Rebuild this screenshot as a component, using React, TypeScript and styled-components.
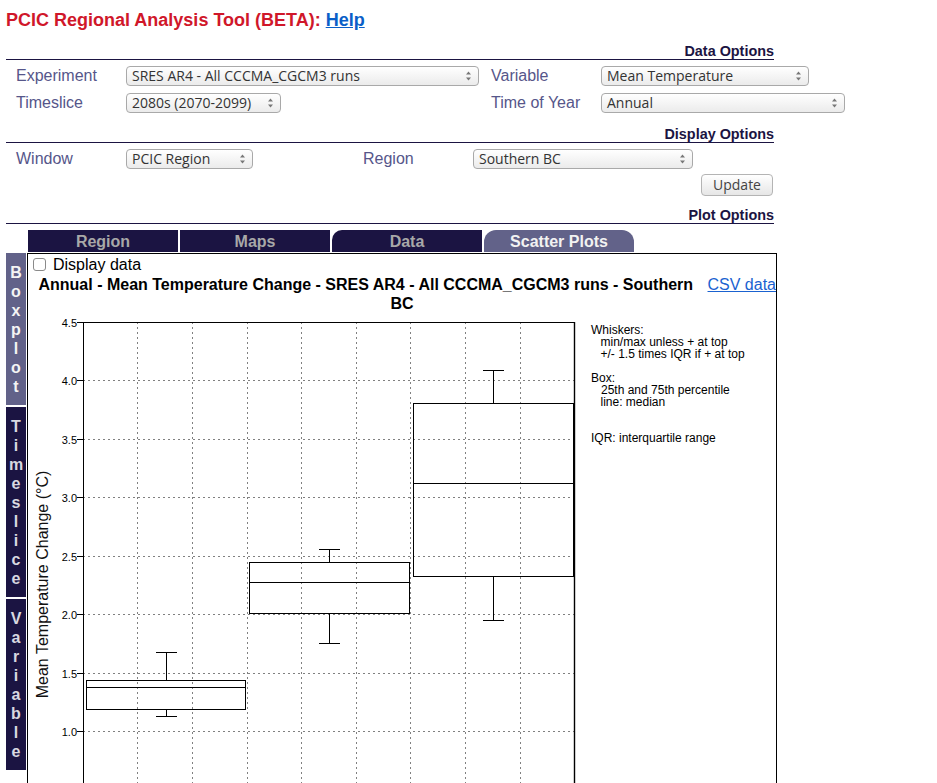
import React from "react";
import styled, { createGlobalStyle } from "styled-components";

const NAVY = "#1b1442";
const TAB_LIGHT = "#626289";

const GlobalStyle = createGlobalStyle`
  html, body { margin: 0; padding: 0; overflow: hidden; background: #fff; }
  body { font-family: "Liberation Sans", Arial, sans-serif; }
`;

const Page = styled.div`
  padding: 0 6px;
  width: 937px;
  box-sizing: border-box;
`;

const Title = styled.h1`
  margin: 0;
  padding-top: 10px;
  height: 40px;
  box-sizing: border-box;
  font-size: 18px;
  line-height: 20px;
  font-weight: bold;
  color: #d0172a;
`;

const HelpLink = styled.a`
  color: #0a5fc8;
  text-decoration: underline;
  cursor: pointer;
`;

const SectionHeading = styled.div<{ $mt: number }>`
  width: 768px;
  margin-top: ${(p) => p.$mt}px;
  padding-top: 3px;
  height: 20px;
  box-sizing: border-box;
  border-bottom: 1px solid ${NAVY};
  text-align: right;
  font-size: 14.4px;
  line-height: 16px;
  font-weight: bold;
  color: ${NAVY};
`;

const FormGrid = styled.div<{ $cols: string }>`
  display: grid;
  grid-template-columns: ${(p) => p.$cols};
  row-gap: 7px;
  align-items: center;
  padding: 6px 0 0 10px;
`;

const Label = styled.span`
  font-size: 16px;
  line-height: 20px;
  color: #56568a;
`;

const SelectBox = styled.div<{ $w: number }>`
  width: ${(p) => p.$w}px;
  height: 20px;
  box-sizing: border-box;
  border: 1px solid #a9a9a9;
  border-radius: 4px;
  background: linear-gradient(#ffffff, #ebebeb);
  display: flex;
  align-items: center;
  justify-content: space-between;
  padding: 0 7px 1px 5px;
  font-family: "Open Sans", "Noto Sans", sans-serif;
  font-size: 14px;
  line-height: 16px;
  color: #333;
  white-space: nowrap;
`;

const ButtonRow = styled.div`
  width: 768px;
  display: flex;
  justify-content: flex-end;
  margin-top: 5px;
`;

const UpdateButton = styled.button`
  width: 72px;
  height: 22px;
  margin-right: 1px;
  padding: 0 0 1px;
  border: 1px solid #b4b4b4;
  border-radius: 4px;
  background: linear-gradient(#ffffff, #e6e6e6);
  font-family: "Open Sans", "Noto Sans", sans-serif;
  font-size: 14px;
  line-height: 16px;
  color: #444;
`;

const TabBar = styled.div`
  display: flex;
  gap: 2px;
  margin: 6px 0 0 22px;
`;

const Tab = styled.div<{ $active?: boolean; $radius: string }>`
  width: 150px;
  height: 22px;
  line-height: 24px;
  text-align: center;
  font-size: 16px;
  font-weight: bold;
  background: ${(p) => (p.$active ? TAB_LIGHT : NAVY)};
  color: ${(p) => (p.$active ? "#f2f2f2" : "#a8a8a8")};
  border-radius: ${(p) => p.$radius};
  overflow: hidden;
`;

const Main = styled.div`
  display: flex;
  margin-top: 1px;
`;

const SideTabs = styled.div`
  width: 21px;
  display: flex;
  flex-direction: column;
  gap: 2px;
`;

const SideTab = styled.div<{ $active?: boolean }>`
  width: 20px;
  padding: 10px 0 9px;
  display: flex;
  flex-direction: column;
  align-items: center;
  font-family: "Liberation Sans Narrow", "Liberation Sans", Arial, sans-serif;
  font-size: 16px;
  font-weight: bold;
  line-height: 19px;
  background: ${(p) => (p.$active ? TAB_LIGHT : NAVY)};
  color: ${(p) => (p.$active ? "#f4f4f4" : "#d8d8e0")};
`;

const ContentBox = styled.div`
  width: 750px;
  height: 560px;
  box-sizing: border-box;
  border: 1px solid #000;
`;

const CheckRow = styled.label`
  display: flex;
  align-items: center;
  height: 21px;
  font-size: 16px;
  color: #000;
`;

const Check = styled.input.attrs({ type: "checkbox" })`
  appearance: none;
  width: 13px;
  height: 13px;
  margin: 0 7px 0 5px;
  border: 1px solid #8a8a8a;
  border-radius: 3px;
  background: #fff;
`;

const PlotTitle = styled.div`
  text-align: center;
  font-weight: bold;
  font-size: 16px;
  line-height: 19px;
  color: #000;
`;

const CsvLink = styled.a`
  float: right;
  margin-left: 4px;
  font-weight: normal;
  color: #1a62d0;
  text-decoration: underline;
`;

const ChartSvg = styled.svg`
  display: block;
  font-family: "Liberation Sans", Arial, sans-serif;
`;

const Arrows = () => (
  <svg width="5" height="12" viewBox="0 0 5 12" style={{ marginTop: 1 }}>
    <path d="M0 4.5 L2.5 1.5 L5 4.5Z M0 7.5 L2.5 10.5 L5 7.5Z" fill="#777" />
  </svg>
);

const Select = ({ w, value }: { w: number; value: string }) => (
  <SelectBox $w={w}>
    <span>{value}</span>
    <Arrows />
  </SelectBox>
);

const Vertical = ({ text, active }: { text: string; active?: boolean }) => (
  <SideTab $active={active}>
    {text.split("").map((c, i) => (
      <span key={i}>{c}</span>
    ))}
  </SideTab>
);

const X0 = 28;
const Y0 = 313;
const GRID_Y = [380.5, 439.5, 497.5, 556.5, 614.5, 673.5, 731.5, 790.5];
const TICKS = ["4.0", "3.5", "3.0", "2.5", "2.0", "1.5", "1.0", "0.5"];
const GRID_X = [137.5, 192.5, 247.5, 301.5, 356.5, 410.5, 465.5, 520.5];
const BOXES = [
  { x1: 86, x2: 245, q1: 709, q3: 680, med: 687, lo: 716, hi: 652, cx: 166 },
  { x1: 249, x2: 409, q1: 613, q3: 562, med: 582, lo: 643, hi: 549, cx: 329 },
  { x1: 413, x2: 573, q1: 576, q3: 403, med: 483, lo: 620, hi: 370, cx: 493 },
];
const LEGEND: [number, number, string][] = [
  [591, 334, "Whiskers:"],
  [600.5, 346, "min/max unless + at top"],
  [600.5, 358, "+/- 1.5 times IQR if + at top"],
  [591, 382, "Box:"],
  [601, 394, "25th and 75th percentile"],
  [600.5, 406, "line: median"],
  [591, 442, "IQR: interquartile range"],
];

const Chart = () => (
  <ChartSvg width={747} height={500} viewBox="0 0 747 500">
    <g transform={`translate(${-X0} ${-Y0})`}>
      {GRID_Y.map((y) => (
        <line key={"h" + y} x1={83} x2={574} y1={y} y2={y} stroke="#808080" strokeDasharray="2 3" />
      ))}
      {GRID_X.map((x) => (
        <line key={"v" + x} x1={x} x2={x} y1={322} y2={820} stroke="#808080" strokeDasharray="2 3" />
      ))}
      <line x1={83} x2={575} y1={322.5} y2={322.5} stroke="#000" />
      <line x1={83.5} x2={83.5} y1={322} y2={820} stroke="#000" />
      <line x1={574.5} x2={574.5} y1={322} y2={820} stroke="#000" strokeWidth={1.4} />
      {[322.5, ...GRID_Y].map((y, i) => (
        <g key={"t" + y}>
          <line x1={77} x2={83} y1={y} y2={y} stroke="#000" />
          <text x={77} y={y + 4.5} fontSize={11} textAnchor="end" fill="#000">
            {i === 0 ? "4.5" : TICKS[i - 1]}
          </text>
        </g>
      ))}
      {BOXES.map((b) => (
        <g key={b.cx} stroke="#000" fill="none">
          <rect x={b.x1 + 0.5} y={b.q3 + 0.5} width={b.x2 - b.x1} height={b.q1 - b.q3} />
          <line x1={b.x1} x2={b.x2} y1={b.med + 0.5} y2={b.med + 0.5} />
          <line x1={b.cx + 0.5} x2={b.cx + 0.5} y1={b.hi} y2={b.q3} />
          <line x1={b.cx + 0.5} x2={b.cx + 0.5} y1={b.q1} y2={b.lo} />
          <line x1={b.cx - 10} x2={b.cx + 11} y1={b.hi + 0.5} y2={b.hi + 0.5} />
          <line x1={b.cx - 10} x2={b.cx + 11} y1={b.lo + 0.5} y2={b.lo + 0.5} />
        </g>
      ))}
      <text
        transform="translate(48 584.5) rotate(-90)"
        textAnchor="middle"
        fontSize={16}
        fill="#111"
      >
        Mean Temperature Change (°C)
      </text>
      {LEGEND.map(([x, y, t]) => (
        <text key={t} x={x} y={y} fontSize={12} fill="#000">
          {t}
        </text>
      ))}
    </g>
  </ChartSvg>
);

export default function App() {
  return (
    <Page>
      <GlobalStyle />
      <Title>
        PCIC Regional Analysis Tool (BETA): <HelpLink>Help</HelpLink>
      </Title>

      <SectionHeading $mt={0}>Data Options</SectionHeading>
      <FormGrid $cols="110px 365px 110px 250px">
        <Label>Experiment</Label>
        <Select w={353} value="SRES AR4 - All CCCMA_CGCM3 runs" />
        <Label>Variable</Label>
        <Select w={208} value="Mean Temperature" />
        <Label>Timeslice</Label>
        <Select w={155} value="2080s (2070-2099)" />
        <Label>Time of Year</Label>
        <Select w={244} value="Annual" />
      </FormGrid>

      <SectionHeading $mt={10}>Display Options</SectionHeading>
      <FormGrid $cols="110px 237px 110px 230px">
        <Label>Window</Label>
        <Select w={127} value="PCIC Region" />
        <Label>Region</Label>
        <Select w={220} value="Southern BC" />
      </FormGrid>
      <ButtonRow>
        <UpdateButton>Update</UpdateButton>
      </ButtonRow>

      <SectionHeading $mt={8}>Plot Options</SectionHeading>
      <TabBar>
        <Tab $radius="0">Region</Tab>
        <Tab $radius="0">Maps</Tab>
        <Tab $radius="10px 0 0 0">Data</Tab>
        <Tab $active $radius="12px 12px 0 0">
          Scatter Plots
        </Tab>
      </TabBar>

      <Main>
        <SideTabs>
          <Vertical text="Boxplot" active />
          <Vertical text="Timeslice" />
          <Vertical text="Variable" />
        </SideTabs>
        <ContentBox>
          <CheckRow>
            <Check />
            Display data
          </CheckRow>
          <PlotTitle>
            <CsvLink>CSV data</CsvLink>
            Annual - Mean Temperature Change - SRES AR4 - All CCCMA_CGCM3 runs - Southern BC
          </PlotTitle>
          <Chart />
        </ContentBox>
      </Main>
    </Page>
  );
}
